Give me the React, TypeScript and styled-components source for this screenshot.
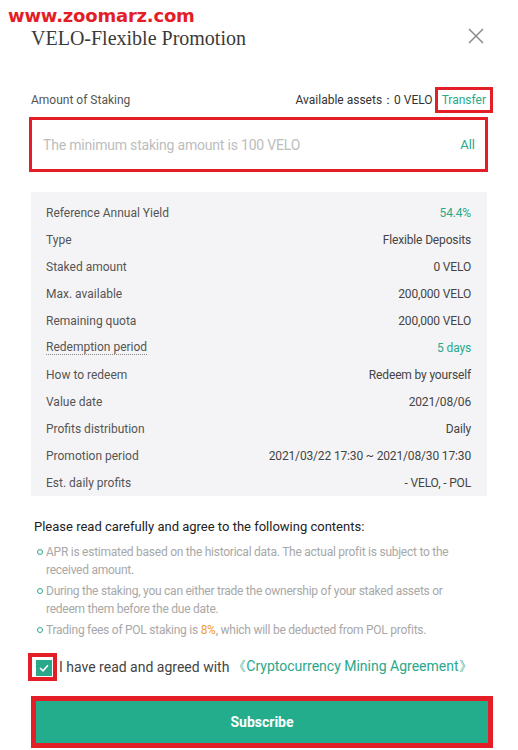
import React from "react";
import styled, { createGlobalStyle } from "styled-components";

const GlobalStyle = createGlobalStyle`
    html, body {
        margin: 0;
        padding: 0;
        background: #ffffff;
    }
    body {
        font-family: Roboto, "Noto Sans", sans-serif;
    }
`;

const RED = "#e31e26";
const GREEN = "#2aa88a";

interface InfoRow {
    label: string,
    value: string,
    green?: boolean,
    dotted?: boolean,
}

const rows: InfoRow[] = [
    {label: "Reference Annual Yield", value: "54.4%", green: true},
    {label: "Type", value: "Flexible Deposits"},
    {label: "Staked amount", value: "0 VELO"},
    {label: "Max. available", value: "200,000 VELO"},
    {label: "Remaining quota", value: "200,000 VELO"},
    {label: "Redemption period", value: "5 days", green: true, dotted: true},
    {label: "How to redeem", value: "Redeem by yourself"},
    {label: "Value date", value: "2021/08/06"},
    {label: "Profits distribution", value: "Daily"},
    {label: "Promotion period", value: "2021/03/22 17:30 ~ 2021/08/30 17:30"},
    {label: "Est. daily profits", value: "- VELO, - POL"},
];

const App: React.FC = () => {
    return (<Page>
        <GlobalStyle/>
        <Watermark>www.zoomarz.com</Watermark>
        <Header>
            <Title>VELO-Flexible Promotion</Title>
            <Close aria-label="close">
                <svg width="16" height="16" viewBox="0 0 16 16">
                    <path d="M1 1 L15 15 M15 1 L1 15" stroke="#8a8a8a" strokeWidth="1.5" fill="none"/>
                </svg>
            </Close>
        </Header>

        <LabelRow>
            <span>Amount of Staking</span>
            <Assets>
                Available assets：0 VELO
                <Transfer>Transfer</Transfer>
            </Assets>
        </LabelRow>

        <InputBox>
            <Placeholder>The minimum staking amount is 100 VELO</Placeholder>
            <AllLink>All</AllLink>
        </InputBox>

        <InfoBox>
            {rows.map((r) => (
                <Row key={r.label}>
                    <RowLabel $dotted={r.dotted}>{r.label}</RowLabel>
                    <RowValue $green={r.green}>{r.value}</RowValue>
                </Row>
            ))}
        </InfoBox>

        <NoticeTitle>Please read carefully and agree to the following contents:</NoticeTitle>
        <Notes>
            <Note>
                <Dot/>
                <span>APR is estimated based on the historical data. The actual profit is subject to the received amount.</span>
            </Note>
            <Note>
                <Dot/>
                <span>During the staking, you can either trade the ownership of your staked assets or redeem them before the due date.</span>
            </Note>
            <Note>
                <Dot/>
                <span>Trading fees of POL staking is <Orange>8%</Orange>, which will be deducted from POL profits.</span>
            </Note>
        </Notes>

        <AgreeRow>
            <CheckFrame>
                <CheckBox>
                    <svg width="10" height="8" viewBox="0 0 10 8">
                        <path d="M1 4 L4 6.8 L9 1.2" stroke="#fff" strokeWidth="1.6" fill="none"/>
                    </svg>
                </CheckBox>
            </CheckFrame>
            <AgreeText>I have read and agreed with</AgreeText>
            <AgreeLink>《Cryptocurrency Mining Agreement》</AgreeLink>
        </AgreeRow>

        <SubscribeButton>Subscribe</SubscribeButton>
    </Page>);
}

const Page = styled.div`
    position: relative;
    width: 518px;
    height: 750px;
    box-sizing: border-box;
    padding: 0 31px;
    overflow: hidden;
    color: #555;
`;

const Watermark = styled.div`
    position: absolute;
    left: 8px;
    top: 5px;
    font-family: "DejaVu Sans", Verdana, sans-serif;
    font-weight: bold;
    font-size: 18px;
    line-height: 22px;
    color: ${RED};
    letter-spacing: -0.2px;
`;

const Header = styled.div`
    display: flex;
    align-items: center;
    justify-content: space-between;
    margin-top: 26px;
    height: 24px;
    padding-right: 3px;
`;

const Title = styled.h1`
    margin: 0;
    font-family: "Liberation Serif", "Times New Roman", serif;
    font-weight: normal;
    font-size: 20px;
    line-height: 24px;
    color: #3a3a3a;
`;

const Close = styled.span`
    display: flex;
    margin-top: -4px;
`;

const LabelRow = styled.div`
    display: flex;
    align-items: center;
    justify-content: space-between;
    margin-top: 37px;
    height: 26px;
    font-size: 12px;
    color: #555;
`;

const Assets = styled.span`
    display: flex;
    align-items: center;
    color: #333;
`;

const Transfer = styled.span`
    display: inline-block;
    margin-left: 2px;
    margin-right: -6px;
    padding: 2px 4px;
    border: 3px solid ${RED};
    color: ${GREEN};
    line-height: 16px;
`;

const InputBox = styled.div`
    display: flex;
    align-items: center;
    justify-content: space-between;
    margin: 4px 0 0 -2px;
    width: 459px;
    height: 55px;
    box-sizing: border-box;
    border: 3px solid ${RED};
    padding: 0 10px 0 11px;
    font-size: 14px;
`;

const Placeholder = styled.span`
    color: #bdbdbd;
    letter-spacing: -0.2px;
`;

const AllLink = styled.span`
    color: ${GREEN};
    font-size: 13px;
`;

const InfoBox = styled.div`
    margin-top: 20px;
    background: #f4f4f6;
    padding: 7px 16px 0 15px;
    height: 304px;
    box-sizing: border-box;
`;

const Row = styled.div`
    display: flex;
    align-items: center;
    justify-content: space-between;
    height: 27px;
    font-size: 12px;
`;

const RowLabel = styled.span<{ $dotted?: boolean }>`
    color: #555;
    border-bottom: ${(p) => p.$dotted ? "1px dotted #888" : "none"};
    line-height: 14px;
`;

const RowValue = styled.span<{ $green?: boolean }>`
    color: ${(p) => p.$green ? GREEN : "#444"};
    letter-spacing: -0.15px;
`;

const NoticeTitle = styled.div`
    margin-top: 22px;
    padding-left: 3px;
    font-size: 13px;
    line-height: 18px;
    color: #222;
`;

const Notes = styled.ul`
    list-style: none;
    margin: 7px 0 0;
    padding: 0 0 0 6px;
    display: flex;
    flex-direction: column;
    gap: 3px;
`;

const Note = styled.li`
    display: flex;
    align-items: flex-start;
    gap: 3px;
    font-size: 12px;
    line-height: 18px;
    letter-spacing: -0.25px;
    color: #a8a8a8;
    padding-right: 20px;
`;

const Dot = styled.i`
    flex: none;
    width: 4px;
    height: 4px;
    margin-top: 6px;
    border: 1.3px solid ${GREEN};
    border-radius: 50%;
`;

const Orange = styled.span`
    color: #f0a030;
`;

const AgreeRow = styled.div`
    display: flex;
    align-items: center;
    margin: 14px 0 0 -3px;
    height: 28px;
    font-size: 14px;
`;

const CheckFrame = styled.span`
    display: flex;
    align-items: center;
    justify-content: flex-end;
    width: 29px;
    height: 28px;
    box-sizing: border-box;
    border: 4px solid ${RED};
    padding: 0 1px 0 2px;
`;

const CheckBox = styled.span`
    display: flex;
    align-items: center;
    justify-content: center;
    width: 16px;
    height: 16px;
    margin-top: 2px;
    background: ${GREEN};
`;

const AgreeText = styled.span`
    margin-left: 2px;
    color: #444;
`;

const AgreeLink = styled.span`
    margin-left: 3px;
    color: ${GREEN};
`;

const SubscribeButton = styled.button`
    display: block;
    margin-top: 15px;
    width: 462px;
    height: 52px;
    box-sizing: border-box;
    border: 5px solid ${RED};
    background: #23ad8c;
    color: #fff;
    font-family: Roboto, sans-serif;
    font-weight: bold;
    font-size: 14px;
    cursor: pointer;
`;

export default App;
